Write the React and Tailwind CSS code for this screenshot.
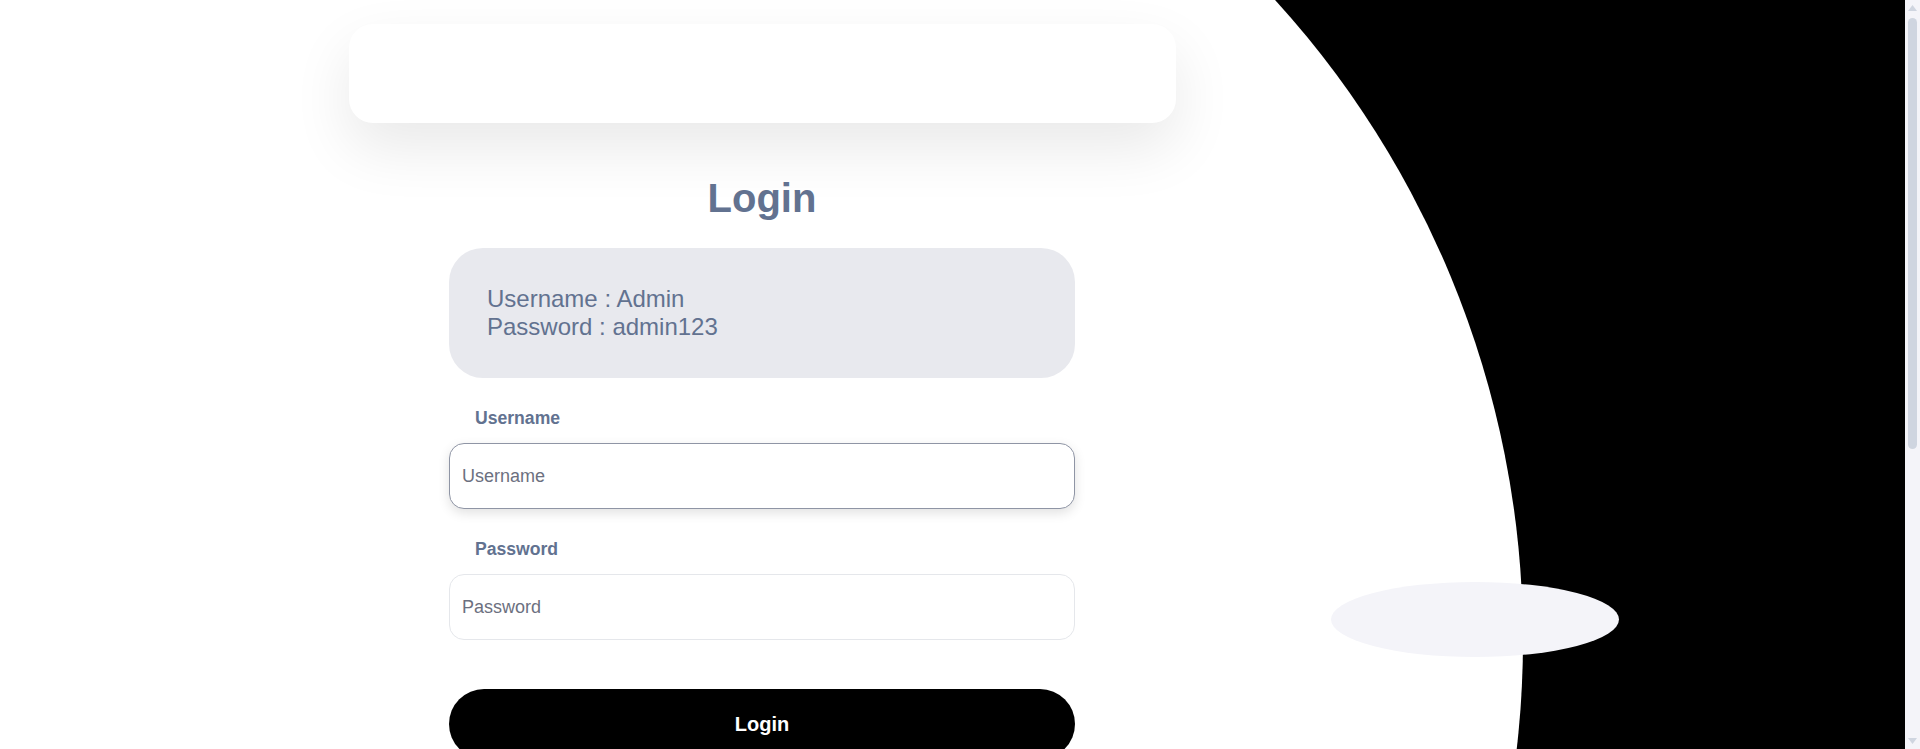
import { useState } from 'react';

const FONT = "font-['Liberation_Sans',Arial,sans-serif]";

function ScrollBar() {
  return (
    <div className="flex h-screen w-[15px] shrink-0 flex-col items-center bg-[#f4f4f9]">
      <svg width="9" height="6" viewBox="0 0 9 6" className="mt-[5px]" aria-hidden>
        <path d="M4.5 0L9 6H0z" fill="#cfd5e0" />
      </svg>
      <div className="mt-[7px] h-[431px] w-[9px] rounded-full bg-[#cfd5e0]" />
      <div className="flex-1" />
      <svg width="9" height="6" viewBox="0 0 9 6" className="mb-[5px]" aria-hidden>
        <path d="M0 0H9L4.5 6z" fill="#cfd5e0" />
      </svg>
    </div>
  );
}

export default function App() {
  const [form, setForm] = useState({ username: '', password: '' });

  return (
    <div className={`flex h-screen overflow-hidden ${FONT}`}>
      <div className="relative h-screen flex-1 overflow-hidden bg-black">
        {/* background shapes */}
        <div className="absolute left-[-377px] top-[-310px] h-[1900px] w-[1900px] rounded-full bg-white" />
        <div className="absolute left-[1331px] top-[582px] h-[75px] w-[288px] rounded-[50%] bg-[#f4f4f9]" />

        <div className="relative flex">
          <main className="flex w-4/5 flex-col items-center pt-6">
            <div className="h-[99px] w-[827px] rounded-3xl bg-white shadow-[0_25px_60px_rgba(0,0,0,0.09)]" />

            <h1 className="mt-[52px] text-[40px] font-bold leading-[46px] text-[#627290]">Login</h1>

            <form className="mt-[27px] flex w-[626px] flex-col" onSubmit={(e) => e.preventDefault()}>
              <div className="rounded-[34px] bg-[#e8e9ee] px-[38px] py-[37px] text-[24px] leading-[28px] text-[#627290]">
                <p>Username : Admin</p>
                <p>Password : admin123</p>
              </div>

              <label className="mt-[30px] pl-[26px] text-[17.6px] font-bold leading-[20px] text-[#627290]">
                Username
              </label>
              <input
                autoFocus
                value={form.username}
                onChange={(e) => setForm({ ...form, username: e.target.value })}
                placeholder="Username"
                className="mt-[15px] h-[66px] rounded-[15px] border border-[#8f95a5] bg-white px-3 text-[18px] text-[#374151] shadow-[0_4px_12px_rgba(0,0,0,0.12)] outline-none placeholder:text-[#6c7080]"
              />

              <label className="mt-[30px] pl-[26px] text-[17.6px] font-bold leading-[20px] text-[#627290]">
                Password
              </label>
              <input
                type="password"
                value={form.password}
                onChange={(e) => setForm({ ...form, password: e.target.value })}
                placeholder="Password"
                className="mt-[15px] h-[66px] rounded-[15px] border border-[#e5e7eb] bg-white px-3 text-[18px] text-[#374151] outline-none placeholder:text-[#6c7080]"
              />

              <button
                type="submit"
                className="mt-[49px] h-[70px] rounded-full bg-black text-[20px] font-bold text-white"
              >
                Login
              </button>
            </form>
          </main>
        </div>
      </div>
      <ScrollBar />
    </div>
  );
}
